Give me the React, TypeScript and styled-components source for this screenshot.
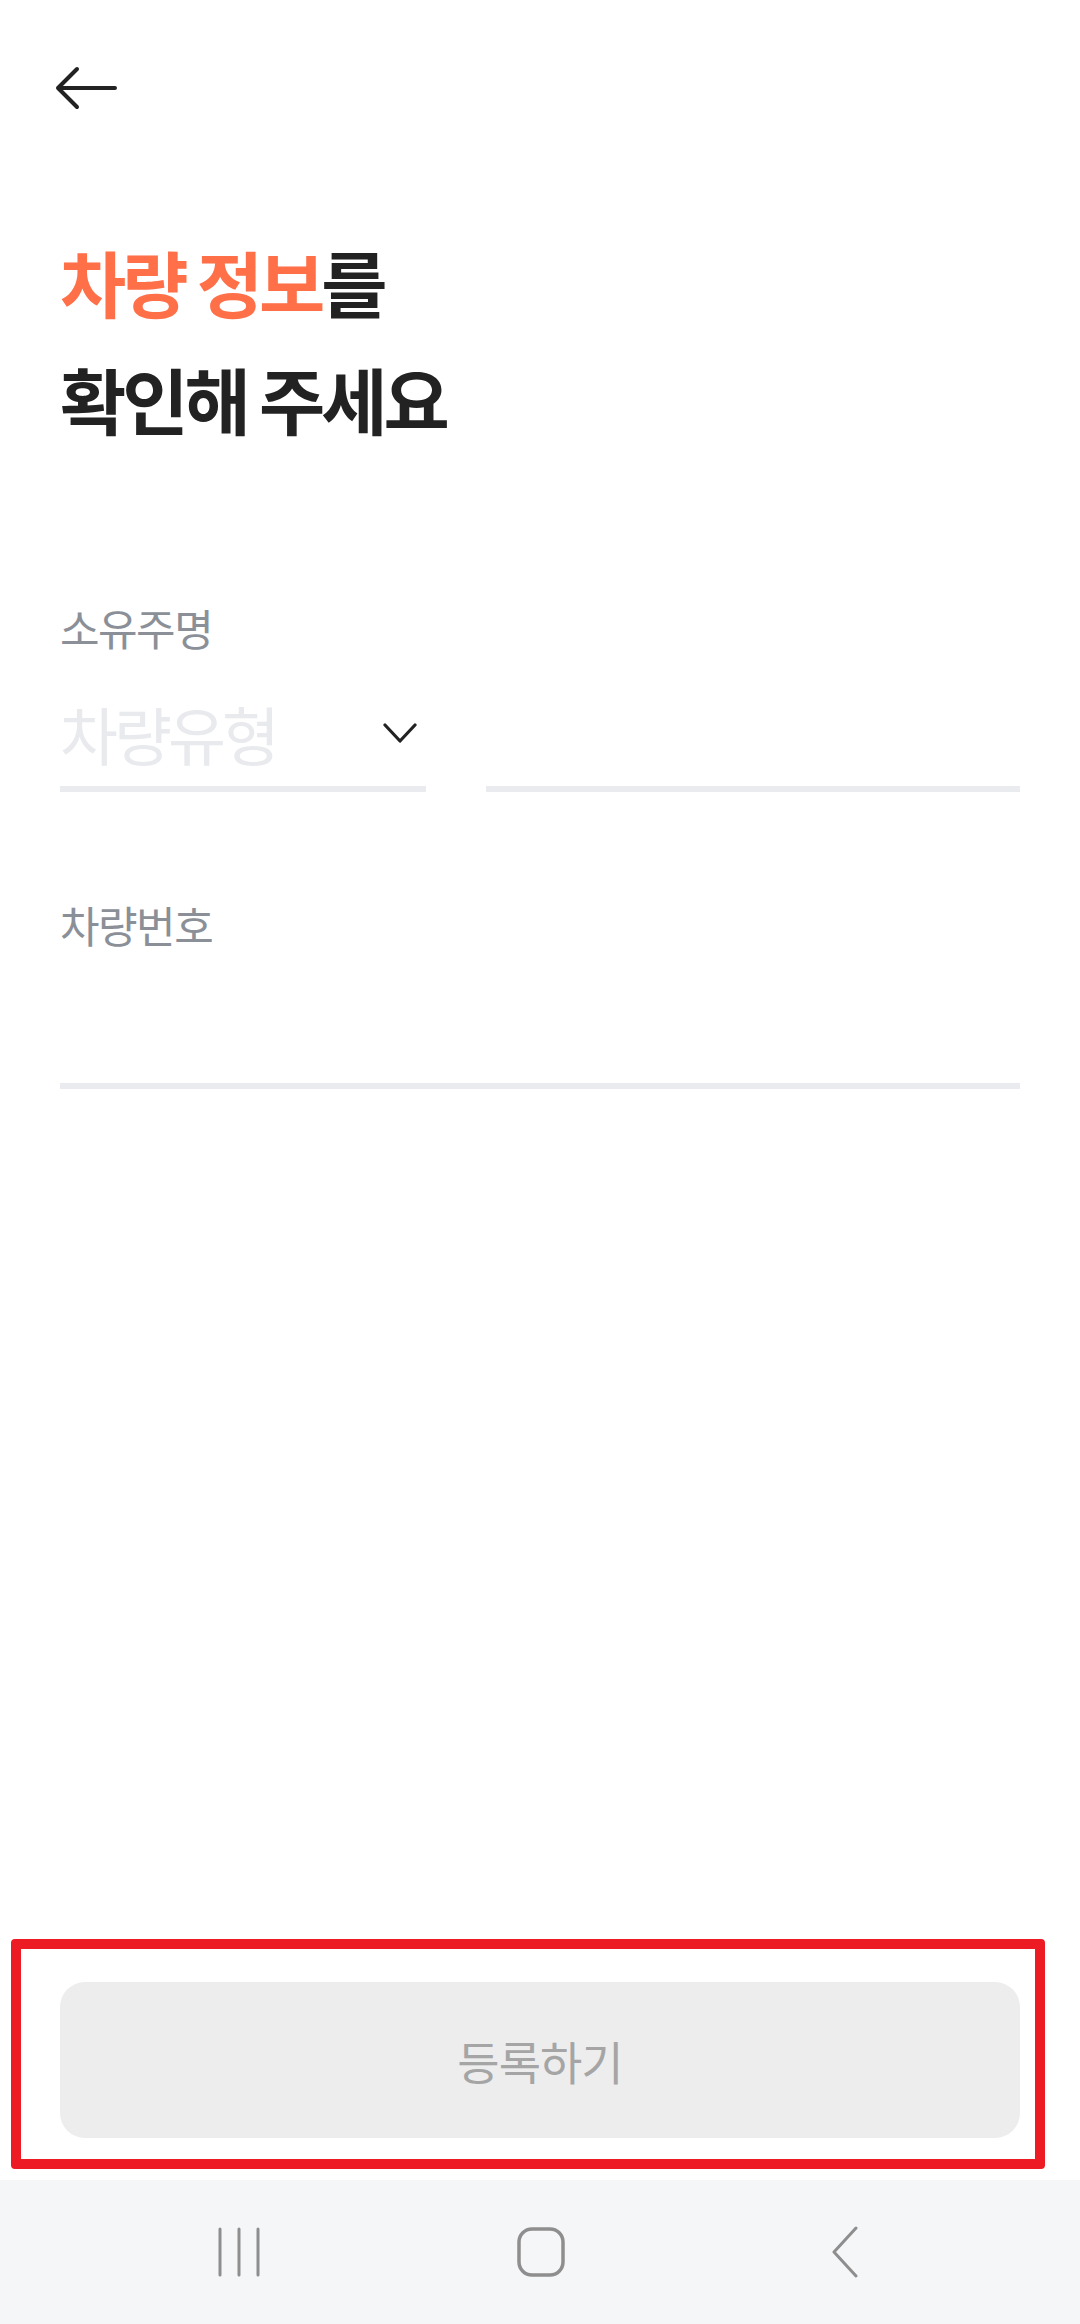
import { FC } from "react";
import styled, { createGlobalStyle } from "styled-components";

const GlobalStyle = createGlobalStyle`
  html, body {
    margin: 0;
    padding: 0;
    background: #ffffff;
  }
  body {
    font-family: "Noto Sans CJK KR", "Noto Sans", sans-serif;
  }
`;

const Page = styled.div`
  position: relative;
  display: flex;
  flex-flow: column nowrap;
  width: 1080px;
  height: 2324px;
  background: #ffffff;
  overflow: hidden;
`;

const Header = styled.div`
  display: flex;
  align-items: center;
  height: 176px;
  padding-left: 55px;
`;

const BackButton = styled.button`
  display: flex;
  align-items: center;
  justify-content: center;
  padding: 0;
  border: none;
  background: none;
  width: 62px;
  height: 44px;
`;

const Content = styled.div`
  display: flex;
  flex-flow: column nowrap;
  padding: 0 60px;
`;

const Title = styled.h1`
  margin: 46px 0 0;
  font-size: 72px;
  line-height: 117px;
  font-weight: 700;
  letter-spacing: -4px;
  color: #222222;
`;

const Accent = styled.span`
  color: #ff6f48;
`;

const Label = styled.div<{ $top: number }>`
  margin-top: ${(p) => p.$top}px;
  font-size: 43px;
  line-height: 52px;
  font-weight: 400;
  letter-spacing: -1.5px;
  color: #8b9098;
`;

const FieldRow = styled.div`
  display: flex;
  flex-flow: row nowrap;
  gap: 60px;
  margin-top: 45px;
`;

const Field = styled.div<{ $width?: number }>`
  display: flex;
  align-items: center;
  justify-content: space-between;
  box-sizing: border-box;
  ${(p) => (p.$width ? `width: ${p.$width}px;` : "flex: 1;")}
  height: 94px;
  padding: 0 9px 18px 0;
  border-bottom: 6px solid #e9ebee;
`;

const Placeholder = styled.span`
  font-size: 63px;
  line-height: 70px;
  font-weight: 400;
  letter-spacing: -4px;
  color: #e8eaed;
`;

const TextInput = styled.div`
  box-sizing: border-box;
  height: 139px;
  border-bottom: 6px solid #e9ebee;
`;

const Spacer = styled.div`
  flex: 1;
`;

const Footer = styled.div`
  display: flex;
  padding: 0 60px 42px;
`;

const SubmitButton = styled.button`
  flex: 1;
  height: 156px;
  border: none;
  border-radius: 25px;
  background: #ededed;
  color: #a5a5a5;
  font-family: "Noto Sans CJK KR", "Noto Sans", sans-serif;
  font-size: 46px;
  font-weight: 400;
  letter-spacing: -1px;
`;

const Highlight = styled.div`
  position: absolute;
  left: 11px;
  top: 1939px;
  width: 1034px;
  height: 230px;
  box-sizing: border-box;
  border: 10px solid #ed1c24;
  border-radius: 4px;
  pointer-events: none;
`;

const NavBar = styled.div`
  display: flex;
  align-items: center;
  height: 144px;
  padding-left: 217px;
  background: #f5f6f8;
`;

const NavIcon = styled.svg<{ $offset?: number }>`
  display: block;
  margin-left: ${(p) => p.$offset ?? 0}px;
`;

const BackArrow: FC = () => (
  <svg width="62" height="44" viewBox="0 0 62 44" fill="none">
    <path
      d="M22 3 L3 22 L22 41 M3 22 H60"
      stroke="#222222"
      strokeWidth="4"
      strokeLinecap="round"
      strokeLinejoin="round"
    />
  </svg>
);

const Chevron: FC = () => (
  <svg width="34" height="21" viewBox="0 0 34 21" fill="none">
    <path
      d="M2 2 L17 18 L32 2"
      stroke="#222222"
      strokeWidth="3.2"
      strokeLinecap="round"
      strokeLinejoin="round"
    />
  </svg>
);

const App: FC = () => {
  return (
    <>
      <GlobalStyle />
      <Page>
        <Header>
          <BackButton aria-label="뒤로">
            <BackArrow />
          </BackButton>
        </Header>
        <Content>
          <Title>
            <Accent>차량 정보</Accent>를
            <br />
            확인해 주세요
          </Title>
          <Label $top={145}>소유주명</Label>
          <FieldRow>
            <Field $width={366}>
              <Placeholder>차량유형</Placeholder>
              <Chevron />
            </Field>
            <Field />
          </FieldRow>
          <Label $top={106}>차량번호</Label>
          <TextInput />
        </Content>
        <Spacer />
        <Footer>
          <SubmitButton disabled>등록하기</SubmitButton>
        </Footer>
        <NavBar>
          <NavIcon width="44" height="50" viewBox="0 0 44 50" fill="none">
            <path
              d="M3 2 V48 M22 2 V48 M41 2 V48"
              stroke="#8e8e8e"
              strokeWidth="3"
              strokeLinecap="round"
            />
          </NavIcon>
          <NavIcon $offset={256} width="48" height="50" viewBox="0 0 48 50" fill="none">
            <rect
              x="2"
              y="2"
              width="44"
              height="46"
              rx="13"
              stroke="#8e8e8e"
              strokeWidth="3.5"
            />
          </NavIcon>
          <NavIcon $offset={265} width="30" height="52" viewBox="0 0 30 52" fill="none">
            <path
              d="M26 2 L4 26 L26 50"
              stroke="#8e8e8e"
              strokeWidth="3"
              strokeLinecap="round"
              strokeLinejoin="round"
            />
          </NavIcon>
        </NavBar>
        <Highlight />
      </Page>
    </>
  );
};

export default App;
